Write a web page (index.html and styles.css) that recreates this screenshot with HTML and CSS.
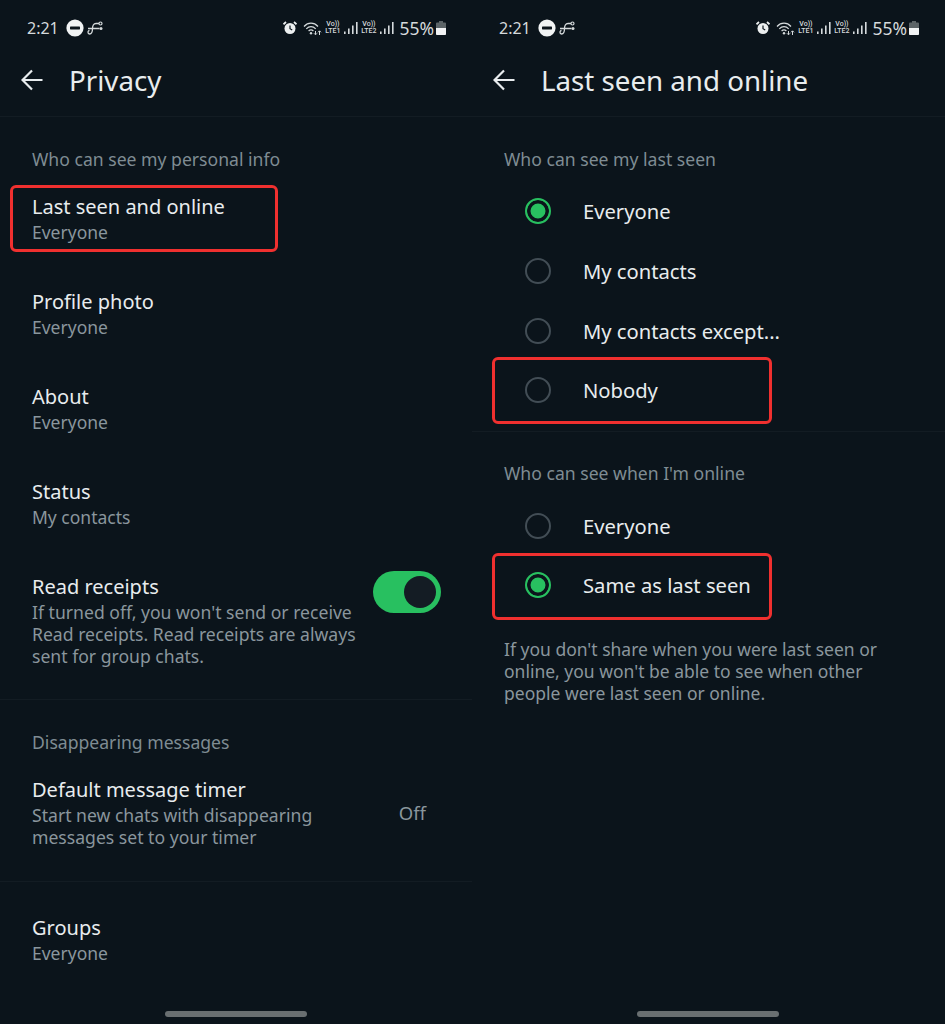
FILE: index.html
```html
<!DOCTYPE html>
<html lang="en">
<head>
  <meta charset="UTF-8" />
  <meta name="viewport" content="width=device-width, initial-scale=1" />
  <title>WhatsApp privacy settings</title>
  <link rel="stylesheet" href="styles.css">
</head>
<body>

  <!-- shared status bar and header icons -->
  <svg class="sprite" aria-hidden="true">
    <symbol id="i-dnd" viewBox="0 0 18 18">
      <circle cx="9" cy="9" r="8.6" fill="#f1f3f4"/>
      <rect x="4" y="7.6" width="10" height="2.8" rx="0.6" fill="#0b141b"/>
    </symbol>
    <symbol id="i-hook" viewBox="0 0 16 14">
      <path d="M2.500 9.500C.5 9.500.5 13 2.500 13 5 13 5.500 10 5.500 7.500S6.500 2.500 9 2.500h3M1 7.500h11.500" fill="none" stroke="#d5dadc" stroke-width="1.300"/>
      <circle cx="13.500" cy="2.500" r="1.500" fill="none" stroke="#d5dadc" stroke-width="1.200"/>
      <circle cx="14" cy="7.500" r="1.500" fill="#d5dadc"/>
    </symbol>
    <symbol id="i-alarm" viewBox="0 0 14 14">
      <circle cx="7" cy="7.500" r="5.500" fill="#eceff0"/>
      <path d="M7 4.500v3.200l2.200 1.300" fill="none" stroke="#0b141b" stroke-width="1.200"/>
      <path d="M0.500 3.200 3 1M13.500 3.200 11 1" stroke="#eceff0" stroke-width="1.800"/>
    </symbol>
    <symbol id="i-wifi" viewBox="0 0 19 15">
      <path d="M1 5.500c4-4.400 10-4.400 14 0M3.300 7.800c2.800-2.900 6.600-2.900 9.400 0M5.600 10c1.500-1.500 3.300-1.500 4.800 0" fill="none" stroke="#d5dadc" stroke-width="1.200"/>
      <circle cx="8" cy="12.300" r="1.200" fill="#d5dadc"/>
      <path d="M12.500 10v3.500M11 12.300l1.500 1.500 1.500-1.500M16.500 14v-4M15 11.300l1.500-1.500 1.500 1.500" fill="none" stroke="#d5dadc" stroke-width="1"/>
    </symbol>
    <symbol id="i-signal" viewBox="0 0 14 14">
      <rect x="0" y="10.500" width="1.600" height="2.500" fill="#d5dadc"/>
      <rect x="4" y="7.500" width="1.600" height="5.500" fill="#d5dadc"/>
      <rect x="8" y="4.500" width="1.600" height="8.500" fill="#d5dadc"/>
      <rect x="12" y="1" width="1.600" height="12" fill="#d5dadc"/>
    </symbol>
    <symbol id="i-battery" viewBox="0 0 10 14">
      <path d="M3 0h4v1.500h2a1 1 0 0 1 1 1V13a1 1 0 0 1-1 1H1a1 1 0 0 1-1-1V2.500a1 1 0 0 1 1-1h2z" fill="#5c6467"/>
      <path d="M0 7h10v6a1 1 0 0 1-1 1H1a1 1 0 0 1-1-1z" fill="#f1f3f4"/>
    </symbol>
    <symbol id="i-back" viewBox="0 0 22 22">
      <path d="M21.500 11H2M11 1.500 1.500 11l9.500 9.500" fill="none" stroke="#e8ecee" stroke-width="2.200"/>
    </symbol>
  </svg>

  <div class="screens">

    <!-- privacy list -->
    <section class="screen">
      <div class="status-bar">
        <div class="status-left">
          <span class="clock">2:21</span>
          <svg class="ic-dnd"><use href="#i-dnd"/></svg>
          <svg class="ic-hook"><use href="#i-hook"/></svg>
        </div>
        <div class="status-right">
          <svg class="ic-alarm"><use href="#i-alarm"/></svg>
          <svg class="ic-wifi"><use href="#i-wifi"/></svg>
          <span class="volte">Vo))<br>LTE1</span>
          <svg class="ic-signal"><use href="#i-signal"/></svg>
          <span class="volte">Vo))<br>LTE2</span>
          <svg class="ic-signal"><use href="#i-signal"/></svg>
          <span class="battery-pct">55%</span>
          <svg class="ic-battery"><use href="#i-battery"/></svg>
        </div>
      </div>
      <header class="app-bar">
        <svg class="ic-back"><use href="#i-back"/></svg>
        <h1>Privacy</h1>
      </header>

      <div class="block">
        <h2 class="block-label">Who can see my personal info</h2>
        <div class="row">
          <div class="row-title">Last seen and online</div>
          <div class="row-sub">Everyone</div>
          <span class="mark mark-list"></span>
        </div>
        <div class="row">
          <div class="row-title">Profile photo</div>
          <div class="row-sub">Everyone</div>
        </div>
        <div class="row">
          <div class="row-title">About</div>
          <div class="row-sub">Everyone</div>
        </div>
        <div class="row">
          <div class="row-title">Status</div>
          <div class="row-sub">My contacts</div>
        </div>
        <div class="row row-receipts">
          <div class="row-text">
            <div class="row-title">Read receipts</div>
            <div class="row-desc">If turned off, you won't send or receive Read receipts. Read receipts are always sent for group chats.</div>
          </div>
          <span class="toggle"><span class="toggle-knob"></span></span>
        </div>
      </div>

      <div class="block">
        <h2 class="block-label">Disappearing messages</h2>
        <div class="row row-timer">
          <div class="row-text">
            <div class="row-title">Default message timer</div>
            <div class="row-desc">Start new chats with disappearing messages set to your timer</div>
          </div>
          <span class="row-value">Off</span>
        </div>
      </div>

      <div class="block block-last">
        <div class="row row-groups">
          <div class="row-title">Groups</div>
          <div class="row-sub">Everyone</div>
        </div>
      </div>

      <div class="home-bar"></div>
    </section>

    <!-- last seen options -->
    <section class="screen">
      <div class="status-bar">
        <div class="status-left">
          <span class="clock">2:21</span>
          <svg class="ic-dnd"><use href="#i-dnd"/></svg>
          <svg class="ic-hook"><use href="#i-hook"/></svg>
        </div>
        <div class="status-right">
          <svg class="ic-alarm"><use href="#i-alarm"/></svg>
          <svg class="ic-wifi"><use href="#i-wifi"/></svg>
          <span class="volte">Vo))<br>LTE1</span>
          <svg class="ic-signal"><use href="#i-signal"/></svg>
          <span class="volte">Vo))<br>LTE2</span>
          <svg class="ic-signal"><use href="#i-signal"/></svg>
          <span class="battery-pct">55%</span>
          <svg class="ic-battery"><use href="#i-battery"/></svg>
        </div>
      </div>
      <header class="app-bar">
        <svg class="ic-back"><use href="#i-back"/></svg>
        <h1>Last seen and online</h1>
      </header>

      <div class="block block-options">
        <h2 class="block-label">Who can see my last seen</h2>
        <div class="options">
          <div class="option"><span class="radio radio-on"></span>Everyone</div>
          <div class="option"><span class="radio"></span>My contacts</div>
          <div class="option"><span class="radio"></span>My contacts except...</div>
          <div class="option"><span class="radio"></span>Nobody<span class="mark mark-option"></span></div>
        </div>
      </div>

      <div class="block block-last">
        <h2 class="block-label">Who can see when I'm online</h2>
        <div class="options options-online">
          <div class="option"><span class="radio"></span>Everyone</div>
          <div class="option"><span class="radio radio-on"></span>Same as last seen<span class="mark mark-option mark-same"></span></div>
        </div>
        <p class="note">If you don't share when you were last seen or online, you won't be able to see when other people were last seen or online.</p>
      </div>

      <div class="home-bar"></div>
    </section>

  </div>

</body>
</html>
```

FILE: styles.css
```css
* {
  box-sizing: border-box;
}
body {
  margin: 0;
  background-color: #0b141b;
  color: #e8ecee;
  font-family: "Noto Sans", "Roboto", sans-serif;
}

.sprite {
  display: none;
}

.screens {
  display: grid;
  grid-template-columns: 472px 473px;
  height: 1024px;
  overflow: hidden;
}
.screen {
  position: relative;
  height: 1024px;
  display: flex;
  flex-direction: column;
}

/* status bar */
.status-bar {
  height: 56px;
  padding: 0 26px 0 27px;
  display: flex;
  justify-content: space-between;
  align-items: center;
}
.status-left,
.status-right {
  display: flex;
  align-items: center;
}
.clock {
  font-size: 16px;
  color: #d5dadc;
}
.ic-dnd {
  width: 18px;
  height: 18px;
  margin-left: 7px;
}
.ic-hook {
  width: 16px;
  height: 14px;
  margin-left: 3px;
}
.ic-alarm {
  width: 14px;
  height: 14px;
}
.ic-wifi {
  width: 19px;
  height: 15px;
  margin-left: 6px;
}
.volte {
  width: 17px;
  margin-left: 2px;
  font-family: "Roboto", sans-serif;
  font-size: 7px;
  line-height: 7px;
  font-weight: 500;
  color: #d5dadc;
  text-align: center;
}
.ic-signal {
  width: 14px;
  height: 14px;
  margin-left: 3px;
}
.battery-pct {
  margin-left: 5px;
  font-size: 17.5px;
  color: #d5dadc;
}
.ic-battery {
  width: 10px;
  height: 14px;
  margin-left: 2px;
}

/* app bar */
.app-bar {
  height: 61px;
  padding: 0 0 12px 21px;
  display: flex;
  align-items: center;
  border-bottom: 1px solid #131c23;
}
.ic-back {
  width: 22px;
  height: 22px;
  flex: none;
}
.app-bar h1 {
  margin: 0 0 1px 26px;
  font-size: 27.7px;
  line-height: 34px;
  font-weight: 400;
  color: #e8ecee;
}

/* sections */
.block {
  padding: 29.5px 0 0;
  border-bottom: 1px solid #131c23;
}
.block-last {
  border-bottom: none;
}
.block-label {
  margin: 0 0 1.5px;
  padding-left: 32px;
  font-size: 17.6px;
  line-height: 24px;
  font-weight: 400;
  color: #7f8c93;
}

/* list rows */
.row {
  position: relative;
  padding: 22px 32px;
}
.row-title {
  font-size: 20px;
  line-height: 26px;
  color: #e8ecee;
}
.row-sub {
  margin-bottom: 1px;
  font-size: 17.5px;
  line-height: 24px;
  color: #8a969d;
}
.row-desc {
  margin: 1px 0;
  font-size: 17.6px;
  line-height: 22px;
  color: #8a969d;
}
.row-receipts {
  display: flex;
  justify-content: space-between;
  align-items: flex-start;
  padding: 22px 31px 31px 32px;
}
.row-receipts .row-text {
  width: 330px;
}
.toggle {
  flex: none;
  width: 68px;
  height: 42px;
  margin-top: -3px;
  padding: 5px;
  display: flex;
  justify-content: flex-end;
  border-radius: 21px;
  background-color: #28c060;
}
.toggle-knob {
  width: 32px;
  height: 32px;
  border-radius: 50%;
  background-color: #141c24;
}
.row-timer {
  display: flex;
  justify-content: space-between;
  align-items: center;
  padding: 22px 46px 32px 32px;
}
.row-timer .row-text {
  width: 310px;
}
.row-value {
  font-size: 18.5px;
  color: #8a969d;
  margin-bottom: 2px;
}
.row-groups {
  padding-top: 3.5px;
}

/* radio options */
.block-options {
  padding-bottom: 10.7px;
}
.options {
  margin-top: 11px;
}
.options-online {
  margin-top: 10.5px;
}
.option {
  position: relative;
  height: 59.7px;
  padding-left: 53px;
  display: flex;
  align-items: center;
  font-size: 20.2px;
  color: #e8ecee;
}
.radio {
  flex: none;
  width: 26px;
  height: 26px;
  margin-right: 32px;
  border: 2px solid #424d55;
  border-radius: 50%;
}
.radio-on {
  border-color: #28c060;
  background-color: #28c060;
  box-shadow: inset 0 0 0 3.5px #0b141b;
}
.note {
  margin: 22.3px 0 0;
  padding: 0 60px 0 32px;
  font-size: 17.5px;
  line-height: 22px;
  color: #8a969d;
}

/* red annotation boxes drawn over the rows */
.mark {
  position: absolute;
  border: 3px solid #f0302f;
  border-radius: 6px;
}
.mark-list {
  top: 13px;
  left: 10px;
  width: 268px;
  height: 67px;
}
.mark-option {
  top: -3.5px;
  left: 20px;
  width: 280px;
  height: 67px;
}
.mark-same {
  top: -3px;
}

/* gesture handle */
.home-bar {
  position: absolute;
  left: 165px;
  bottom: 7px;
  width: 142px;
  height: 6px;
  border-radius: 3px;
  background-color: #696f71;
}
```
